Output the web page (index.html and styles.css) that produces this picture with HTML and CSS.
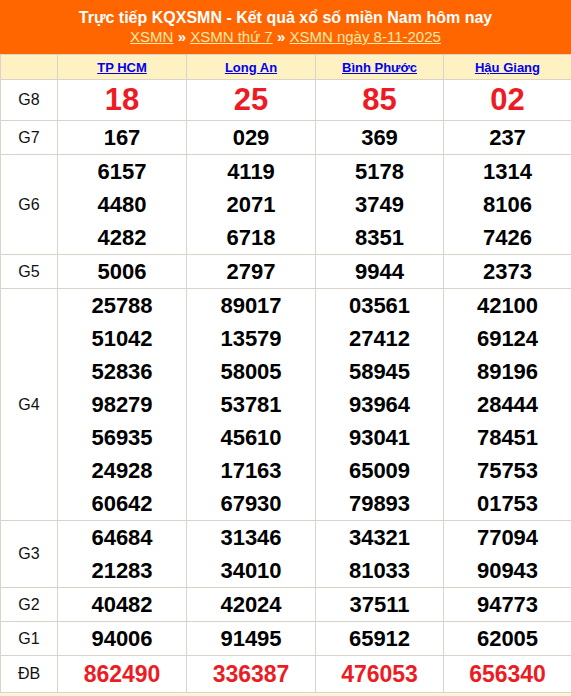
FILE: index.html
```html
<!DOCTYPE html>
<html lang="vi">
<head>
<meta charset="utf-8">
<title>XSMN 8-11-2025</title>
<link rel="stylesheet" href="styles.css">
</head>
<body>
<div class="page">
  <div class="banner">
    <h1 class="banner-title">Trực tiếp KQXSMN - Kết quả xổ số miền Nam hôm nay</h1>
    <div class="crumbs"><a href="#">XSMN</a> <span class="sep">»</span> <a href="#">XSMN thứ 7</a> <span class="sep">»</span> <a href="#">XSMN ngày 8-11-2025</a></div>
  </div>
  <table class="results">
    <colgroup>
      <col class="c-label"><col class="c-prov"><col class="c-prov"><col class="c-prov4"><col class="c-prov4">
    </colgroup>
    <thead>
      <tr class="head-row">
        <th></th>
        <th><a href="#">TP HCM</a></th>
        <th><a href="#">Long An</a></th>
        <th><a href="#">Bình Phước</a></th>
        <th><a href="#">Hậu Giang</a></th>
      </tr>
    </thead>
    <tbody>
      <tr class="row-g8">
        <td class="label">G8</td>
        <td><div class="num big red">18</div></td>
        <td><div class="num big red">25</div></td>
        <td><div class="num big red">85</div></td>
        <td><div class="num big red">02</div></td>
      </tr>
      <tr>
        <td class="label">G7</td>
        <td><div class="num">167</div></td>
        <td><div class="num">029</div></td>
        <td><div class="num">369</div></td>
        <td><div class="num">237</div></td>
      </tr>
      <tr>
        <td class="label">G6</td>
        <td><div class="num">6157</div><div class="num">4480</div><div class="num">4282</div></td>
        <td><div class="num">4119</div><div class="num">2071</div><div class="num">6718</div></td>
        <td><div class="num">5178</div><div class="num">3749</div><div class="num">8351</div></td>
        <td><div class="num">1314</div><div class="num">8106</div><div class="num">7426</div></td>
      </tr>
      <tr>
        <td class="label">G5</td>
        <td><div class="num">5006</div></td>
        <td><div class="num">2797</div></td>
        <td><div class="num">9944</div></td>
        <td><div class="num">2373</div></td>
      </tr>
      <tr>
        <td class="label">G4</td>
        <td><div class="num">25788</div><div class="num">51042</div><div class="num">52836</div><div class="num">98279</div><div class="num">56935</div><div class="num">24928</div><div class="num">60642</div></td>
        <td><div class="num">89017</div><div class="num">13579</div><div class="num">58005</div><div class="num">53781</div><div class="num">45610</div><div class="num">17163</div><div class="num">67930</div></td>
        <td><div class="num">03561</div><div class="num">27412</div><div class="num">58945</div><div class="num">93964</div><div class="num">93041</div><div class="num">65009</div><div class="num">79893</div></td>
        <td><div class="num">42100</div><div class="num">69124</div><div class="num">89196</div><div class="num">28444</div><div class="num">78451</div><div class="num">75753</div><div class="num">01753</div></td>
      </tr>
      <tr>
        <td class="label">G3</td>
        <td><div class="num">64684</div><div class="num">21283</div></td>
        <td><div class="num">31346</div><div class="num">34010</div></td>
        <td><div class="num">34321</div><div class="num">81033</div></td>
        <td><div class="num">77094</div><div class="num">90943</div></td>
      </tr>
      <tr>
        <td class="label">G2</td>
        <td><div class="num">40482</div></td>
        <td><div class="num">42024</div></td>
        <td><div class="num">37511</div></td>
        <td><div class="num">94773</div></td>
      </tr>
      <tr>
        <td class="label">G1</td>
        <td><div class="num">94006</div></td>
        <td><div class="num">91495</div></td>
        <td><div class="num">65912</div></td>
        <td><div class="num">62005</div></td>
      </tr>
      <tr class="row-db">
        <td class="label">ĐB</td>
        <td><div class="num special red">862490</div></td>
        <td><div class="num special red">336387</div></td>
        <td><div class="num special red">476053</div></td>
        <td><div class="num special red">656340</div></td>
      </tr>
    </tbody>
  </table>
  <div class="after"></div>
</div>
</body>
</html>
```

FILE: styles.css
```css
html, body {
  margin: 0;
  padding: 0;
  background: #ffffff;
}

body {
  font-family: "Liberation Sans", Arial, sans-serif;
  color: #000;
}

.page {
  width: 571px;
}

.banner {
  background: #ff6600;
  height: 54px;
  box-sizing: border-box;
  padding-top: 8px;
  text-align: center;
  color: #fff;
}

.banner-title {
  margin: 0;
  font-size: 16px;
  font-weight: bold;
  line-height: 20px;
}

.crumbs {
  font-size: 15px;
  line-height: 18px;
}

.crumbs a {
  color: #ffe9a8;
  text-decoration: underline;
}

.crumbs .sep {
  color: #fff;
  font-weight: bold;
}

.results {
  width: 571px;
  table-layout: fixed;
  border-collapse: collapse;
}

.c-label { width: 57px; }
.c-prov { width: 129px; }
.c-prov4 { width: 128px; }

.results th,
.results td {
  border: 1px solid #d9d3cb;
  padding: 0;
  text-align: center;
  vertical-align: middle;
}

.head-row th {
  background: #fef1c2;
  height: 24px;
  font-size: 13px;
  font-weight: bold;
}

.head-row th a {
  color: #0000ee;
  text-decoration: underline;
}

.label {
  font-size: 16px;
  color: #111;
}

.num {
  font-size: 22px;
  font-weight: bold;
  line-height: 33px;
}

.num.big {
  font-size: 31px;
  line-height: 40px;
}

.num.special {
  font-size: 23px;
  line-height: 36px;
}

.red {
  color: #ed1c24;
}

.after {
  height: 4px;
  background: #fef6d8;
}
```
